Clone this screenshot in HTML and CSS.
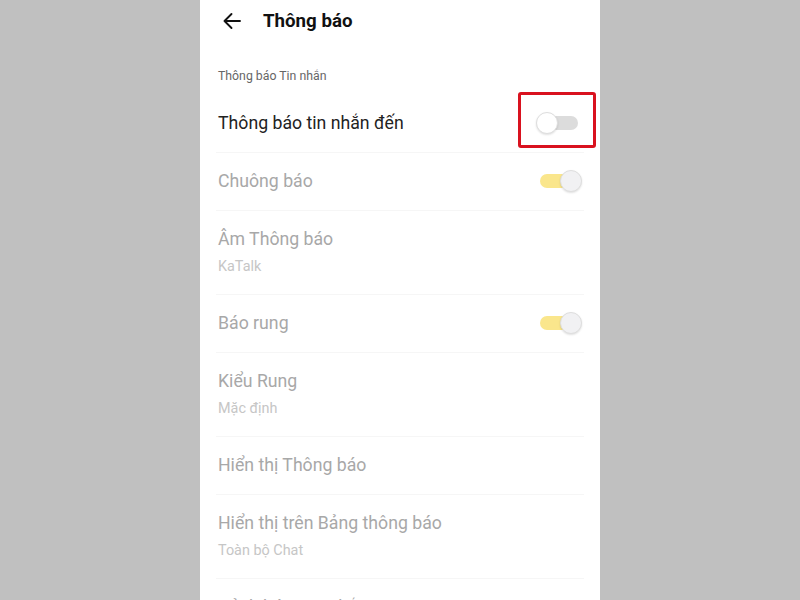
FILE: index.html
```
<!DOCTYPE html>
<html lang="vi">
<head>
    <meta charset="UTF-8">
    <meta name="viewport" content="width=device-width, initial-scale=1.0">
    <title>Thông báo</title>
    <link rel="stylesheet" href="styles.css">
</head>
<body>
    <div class="screen">
        <div class="topbar">
            <svg class="back" width="24" height="24" viewBox="0 0 24 24">
                <path d="M20 12H4.5M11.5 5l-7 7 7 7" fill="none" stroke="#111" stroke-width="1.9" stroke-linecap="round" stroke-linejoin="round"/>
            </svg>
            <div class="title">Thông báo</div>
        </div>

        <div class="section-label">Thông báo Tin nhắn</div>

        <div class="row highlight">
            <div class="row-title active">Thông báo tin nhắn đến</div>
            <div class="switch off"><span class="track"></span><span class="knob"></span></div>
            <div class="red-box"></div>
        </div>

        <div class="row">
            <div class="row-title">Chuông báo</div>
            <div class="switch on"><span class="track"></span><span class="knob"></span></div>
        </div>

        <div class="row double">
            <div class="row-title">Âm Thông báo</div>
            <div class="row-sub">KaTalk</div>
        </div>

        <div class="row">
            <div class="row-title">Báo rung</div>
            <div class="switch on"><span class="track"></span><span class="knob"></span></div>
        </div>

        <div class="row double">
            <div class="row-title">Kiểu Rung</div>
            <div class="row-sub">Mặc định</div>
        </div>

        <div class="row">
            <div class="row-title">Hiển thị Thông báo</div>
        </div>

        <div class="row double">
            <div class="row-title">Hiển thị trên Bảng thông báo</div>
            <div class="row-sub">Toàn bộ Chat</div>
        </div>

        <div class="row double">
            <div class="row-title">Cảnh báo Tin Nhắn</div>
        </div>
    </div>
</body>
</html>
```

FILE: styles.css
```
body {
    margin: 0;
    background: #c0c0c0;
    font-family: Roboto, "Noto Sans", sans-serif;
}

.screen {
    width: 400px;
    height: 600px;
    margin: 0 auto;
    background: #fff;
    overflow: hidden;
}

.topbar {
    display: flex;
    align-items: center;
    height: 44px;
    padding-left: 20px;
}

.topbar .back {
    margin-top: -2px;
}

.topbar .title {
    margin-left: 19px;
    margin-top: -2px;
    font-size: 18.7px;
    font-weight: bold;
    color: #111;
}

.section-label {
    padding: 24px 18px 10px;
    font-size: 12.3px;
    line-height: 16px;
    color: #666;
}

.row {
    position: relative;
    display: flex;
    justify-content: space-between;
    align-items: center;
    height: 58px;
    padding: 0 18px;
}

/* faint divider between rows */
.row::before {
    content: "";
    position: absolute;
    top: 0;
    left: 16px;
    right: 16px;
    height: 1px;
    background: #f6f6f6;
}

.row.highlight::before {
    display: none;
}

.row.double {
    display: block;
    height: auto;
    padding-top: 17px;
    padding-bottom: 17px;
}

.row-title {
    font-size: 17.7px;
    line-height: 24px;
    color: #a8a8a8;
}

.row-title.active {
    color: #222;
}

.row-sub {
    margin-top: 6px;
    font-size: 14.4px;
    line-height: 20px;
    color: #c6c6c6;
}

.switch {
    position: relative;
    width: 46px;
    height: 24px;
}

.switch .track {
    position: absolute;
    left: 4px;
    right: 4px;
    top: 5px;
    height: 14px;
    border-radius: 7px;
    background: #dcdcdc;
}

.switch.on .track {
    background: #fae68c;
}

.switch .knob {
    position: absolute;
    top: 1px;
    width: 20px;
    height: 20px;
    border-radius: 50%;
    background: #fff;
    border: 1px solid #dedede;
    box-shadow: 0 1px 2px rgba(0, 0, 0, 0.12);
}

.switch.off .knob {
    left: 0;
}

.switch.on .knob {
    right: 0;
    background: #f1f1f3;
}

.red-box {
    position: absolute;
    left: 318px;
    right: 4px;
    top: -2px;
    bottom: 4px;
    border: 3px solid #d9121f;
    border-radius: 3px;
}
```
